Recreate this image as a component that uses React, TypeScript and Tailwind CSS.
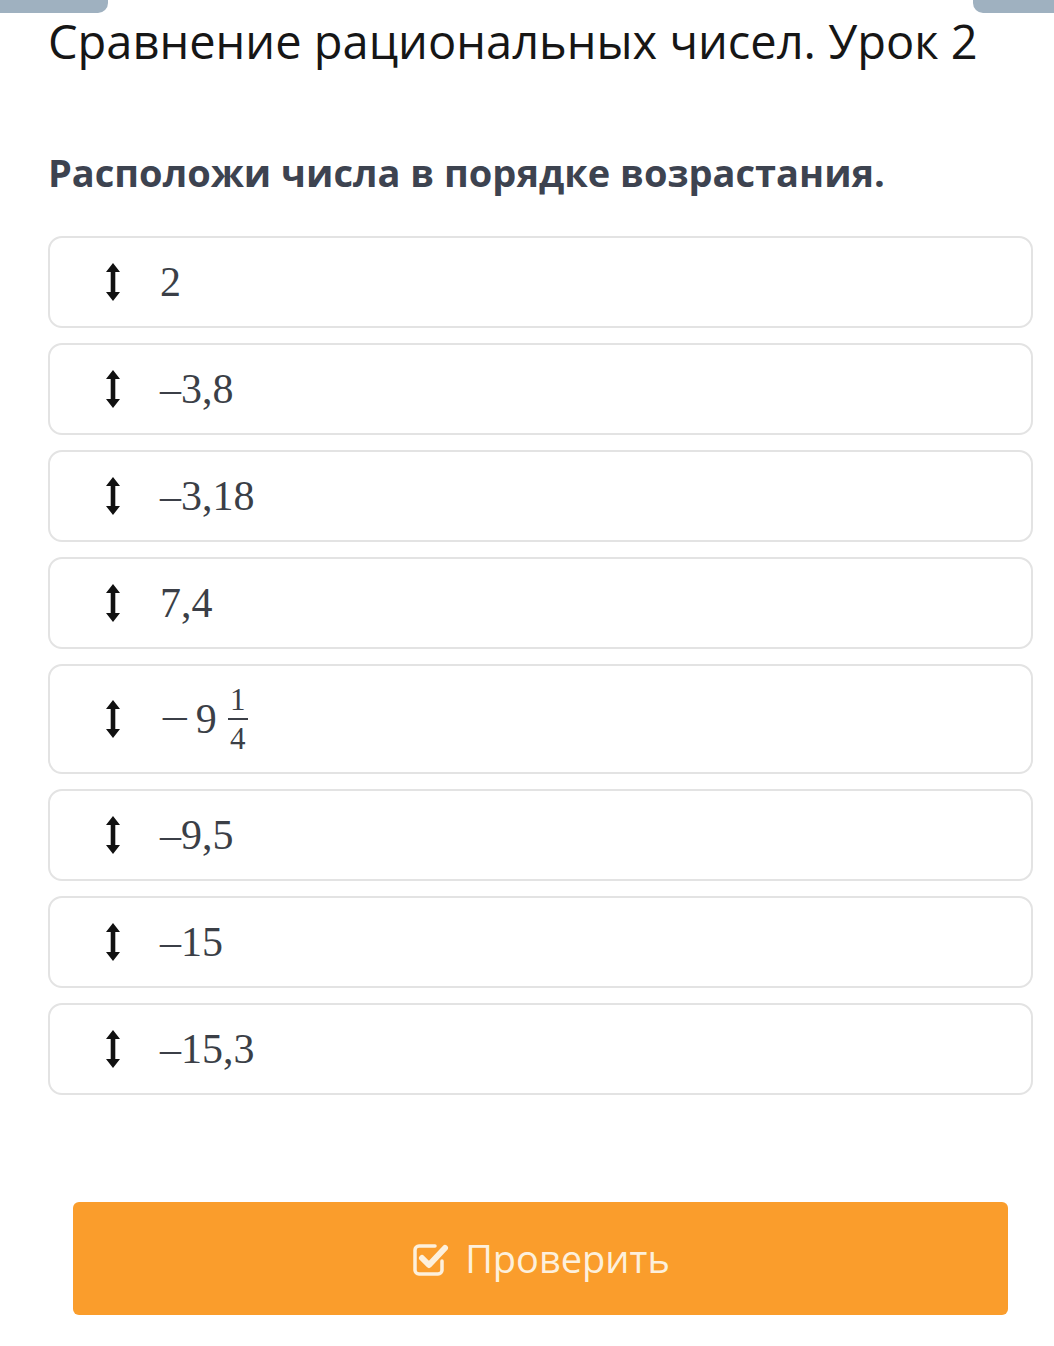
import React from 'react'

const items: { key: string; value: React.ReactNode; tall?: boolean }[] = [
  { key: 'a', value: '2' },
  { key: 'b', value: '–3,8' },
  { key: 'c', value: '–3,18' },
  { key: 'd', value: '7,4' },
  { key: 'e', value: 'frac', tall: true },
  { key: 'f', value: '–9,5' },
  { key: 'g', value: '–15' },
  { key: 'h', value: '–15,3' },
]

function DragIcon() {
  return (
    <svg width="14" height="38" viewBox="0 0 14 38" className="shrink-0">
      <path d="M7 0 L14 9 L9.3 9 L9.3 29 L14 29 L7 38 L0 29 L4.7 29 L4.7 9 L0 9 Z" fill="#111" strokeLinejoin="round" />
    </svg>
  )
}

function CheckSquare() {
  return (
    <svg width="40" height="38" viewBox="0 0 40 38" fill="none">
      <path
        d="M31 21 V30 a4 4 0 0 1 -4 4 H8 a4 4 0 0 1 -4 -4 V10 a4 4 0 0 1 4 -4 H24"
        stroke="#fdf0dc"
        strokeWidth="3.5"
        strokeLinecap="round"
      />
      <path d="M11 18 L18 25 L34 8" stroke="#fdf0dc" strokeWidth="6" strokeLinecap="round" strokeLinejoin="round" />
    </svg>
  )
}

function MixedFraction() {
  return (
    <span className="flex items-center text-[#3b3f47]" style={{ fontFamily: '"Liberation Serif", serif' }}>
      <span className="inline-block origin-left scale-x-125 text-[42px] leading-none">−</span>
      <span className="ml-[12px] text-[42px] leading-none">9</span>
      <span className="ml-[11px] flex flex-col items-center text-[31px] leading-none">
        <span className="pb-[3px]">1</span>
        <span className="h-[2px] w-[20px] bg-[#3b3f47]" />
        <span className="pt-[3px]">4</span>
      </span>
    </span>
  )
}

export default function App() {
  return (
    <div className="min-h-[1346px] bg-white" style={{ fontFamily: '"Open Sans", sans-serif' }}>
      <div className="flex h-[13px] justify-between">
        <div className="h-[13px] w-[108px] rounded-br-[10px] bg-[#9fb1c0]" />
        <div className="h-[13px] w-[81px] rounded-bl-[10px] bg-[#9fb1c0]" />
      </div>

      <div className="pl-[48px] pr-[21px]">
        <h1 className="text-[47px] leading-[56px] text-[#161616]">Сравнение рациональных чисел. Урок 2</h1>

        <p className="mt-[79px] text-[38px] font-bold leading-[48px] text-[#3d4350]">Расположи числа в порядке возрастания.</p>

        <div className="mt-[40px] flex flex-col gap-[15px]">
          {items.map((it) => (
            <div
              key={it.key}
              className={`flex items-center gap-[40px] rounded-[14px] border-2 border-[#e3e3e3] bg-white pl-[56px] ${it.tall ? 'h-[110px]' : 'h-[92px]'}`}
            >
              <DragIcon />
              {it.value === 'frac' ? (
                <MixedFraction />
              ) : (
                <span className="text-[42px] leading-none text-[#3b3f47]" style={{ fontFamily: '"Liberation Serif", serif' }}>
                  {it.value}
                </span>
              )}
            </div>
          ))}
        </div>

        <div className="px-[25px] pt-[107px]">
          <button className="flex h-[113px] w-full items-center justify-center gap-[14px] rounded-[6px] bg-[#fa9d2c] text-[38px] text-[#fdf0dc]">
            <CheckSquare />
            <span>Проверить</span>
          </button>
        </div>
      </div>
    </div>
  )
}
